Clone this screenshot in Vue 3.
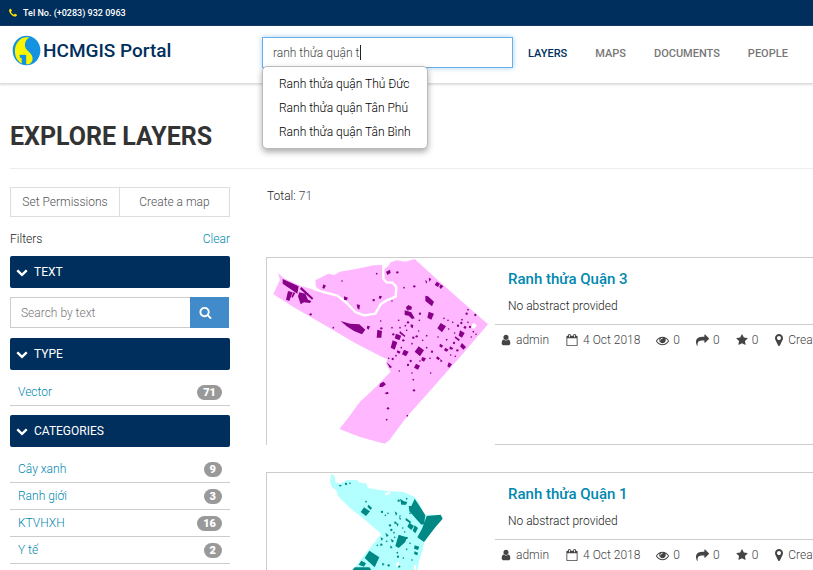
<script setup>
import { ref } from 'vue'

const icons = {
  phone: 'M1600 1240q0 27-10 70.5t-21 68.5q-21 50-122 106-94 51-186 51-27 0-53-3.5t-57.5-12.5-47-14.5-55.5-20.5-49-18q-98-35-175-83-127-79-264-216t-216-264q-48-77-83-175-3-9-18-49t-20.5-55.5-14.5-47-12.5-57.5-3.5-53q0-92 51-186 56-101 106-122 25-11 68.5-21t70.5-10q14 0 21 3 18 6 53 76 11 19 30 54t35 63.5 31 53.5q3 4 17.5 25t21.5 35.5 7 28.5q0 20-28.5 50t-62 55-62 53-28.5 46q0 9 5 22.5t8.5 20.5 14 24 11.5 19q76 137 174 235t235 174q2 1 19 11.5t24 14 20.5 8.5 22.5 5q18 0 46-28.5t53-62 55-62 50-28.5q14 0 28.5 7t35.5 21.5 25 17.5q25 15 53.5 31t63.5 35 54 30q70 35 76 53 3 7 3 21z',
  search: 'M1216 832q0-185-131.5-316.5t-316.5-131.5-316.5 131.5-131.5 316.5 131.5 316.5 316.5 131.5 316.5-131.5 131.5-316.5zm512 832q0 52-38 90t-90 38q-54 0-90-38l-343-342q-179 124-399 124-143 0-273.5-55.5t-225-150-150-225-55.5-273.5 55.5-273.5 150-225 225-150 273.5-55.5 273.5 55.5 225 150 150 225 55.5 273.5q0 220-124 399l343 343q37 37 37 90z',
  chevron: 'M1683 808l-742 741q-19 19-45 19t-45-19l-742-741q-19-19-19-45.5t19-45.5l166-165q19-19 45-19t45 19l531 531 531-531q19-19 45-19t45 19l166 165q19 19 19 45.5t-19 45.5z',
  user: 'M1536 1399q0 109-62.5 187t-150.5 78h-854q-88 0-150.5-78t-62.5-187q0-85 8.5-160.5t31.5-152 58.5-131 94-89 134.5-34.5q131 128 313 128t313-128q76 0 134.5 34.5t94 89 58.5 131 31.5 152 8.5 160.5zm-256-887q0 159-112.5 271.5t-271.5 112.5-271.5-112.5-112.5-271.5 112.5-271.5 271.5-112.5 271.5 112.5 112.5 271.5z',
  calendar: 'M192 1664h1408v-1024h-1408v1024zm384-1216v-288q0-14-9-23t-23-9h-64q-14 0-23 9t-9 23v288q0 14 9 23t23 9h64q14 0 23-9t9-23zm768 0v-288q0-14-9-23t-23-9h-64q-14 0-23 9t-9 23v288q0 14 9 23t23 9h64q14 0 23-9t9-23zm384-64v1280q0 52-38 90t-90 38h-1408q-52 0-90-38t-38-90v-1280q0-52 38-90t90-38h128v-96q0-66 47-113t113-47h64q66 0 113 47t47 113v96h384v-96q0-66 47-113t113-47h64q66 0 113 47t47 113v96h128q52 0 90 38t38 90z',
  eye: 'M1664 960q-152-236-381-353 61 104 61 225 0 185-131.5 316.5t-316.5 131.5-316.5-131.5-131.5-316.5q0-121 61-225-229 117-381 353 133 205 333.5 326.5t434.5 121.5 434.5-121.5 333.5-326.5zm-720-384q0-20-14-34t-34-14q-125 0-214.5 89.5t-89.5 214.5q0 20 14 34t34 14 34-14 14-34q0-86 61-147t147-61q20 0 34-14t14-34zm848 384q0 34-20 69-140 230-376.5 368.5t-499.5 138.5-499.5-139-376.5-368q-20-35-20-69t20-69q140-229 376.5-368t499.5-139 499.5 139 376.5 368q20 35 20 69z',
  share: 'M1792 640q0 26-19 45l-512 512q-19 19-45 19t-45-19-19-45v-256h-224q-98 0-175.5 6t-154 21.5-133 42.5-105.5 69.5-80 101-48.5 138.5-17.5 181q0 55 5 123 0 6 2.5 23.5t2.5 26.5q0 15-8.5 25t-23.5 10q-16 0-28-17-7-9-13-22t-13.5-30-10.5-24q-127-285-127-451 0-199 53-333 162-403 875-403h224v-256q0-26 19-45t45-19 45 19l512 512q19 19 19 45z',
  star: 'M1728 647q0 22-26 48l-363 354 86 500q1 7 1 20 0 21-10.5 35.5t-30.5 14.5q-19 0-40-12l-449-236-449 236q-22 12-40 12-21 0-31.5-14.5t-10.5-35.5q0-6 2-20l86-500-364-354q-25-27-25-48 0-37 56-46l502-73 225-455q19-41 49-41t49 41l225 455 502 73q56 9 56 46z',
  marker: 'M1152 640q0-106-75-181t-181-75-181 75-75 181 75 181 181 75 181-75 75-181zm256 0q0 109-33 179l-364 774q-16 33-47.5 52t-67.5 19-67.5-19-46.5-52l-365-774q-33-70-33-179 0-212 150-362t362-150 362 150 150 362z'
}

const query = ref('ranh thửa quận t')
const filterText = ref('')
const suggestions = ['Ranh thửa quận Thủ Đức', 'Ranh thửa quận Tân Phú', 'Ranh thửa quận Tân Bình']
const nav = ['LAYERS', 'MAPS', 'DOCUMENTS', 'PEOPLE']
const types = [{ name: 'Vector', count: 71 }]
const categories = [
  { name: 'Cây xanh', count: 9 },
  { name: 'Ranh giới', count: 3 },
  { name: 'KTVHXH', count: 16 },
  { name: 'Y tế', count: 2 },
  { name: 'Giao thông', count: 5 }
]

const layers = [
  {
    title: 'Ranh thửa Quận 3',
    view: '21 25 684 561',
    land: '#ffb8ff',
    fill: '#880088',
    area: 'M54 70L72 86 120 108 187 127 168 112 166 92 205 72 222 76 240 66 300 56 340 47 368 46 374 58 388 46 392 38 410 32 436 36 464 28 530 88 600 150 684 224 600 322 520 412 440 502 388 572 374 582 300 562 238 538 262 508 300 456 350 410 392 366 378 342 382 328 366 322 285 280 200 230 100 172 40 134 60 90Z',
    channel: 'M370 44V88L380 98 398 99 409 112 407 141 380 152 362 164 346 192 312 197 286 187 260 160 232 138 190 127 160 118',
    shapes: 'M68 88L116 110 112 132 88 116 68 102ZM84 124L98 128 88 154 78 150ZM100 128L106 130 98 144 94 142ZM124 112L160 146 156 150 120 118ZM118 128L136 132 144 150 154 154 150 160 132 158 122 164 114 140ZM242 214L270 222 298 224 316 240 306 254 282 244 260 230ZM190 104L198 108 192 118 187 114ZM252 140L264 144 260 152 252 150ZM290 164L300 166 298 180 292 176ZM378 66L390 60 392 70 382 76ZM338 148H344V155H338ZM358 138L366 140 362 148 356 146ZM322 228L330 230 326 240 320 236ZM352 240L366 244 364 264 350 264ZM408 252L424 258 418 272 404 266ZM398 272L412 278 404 300 392 294ZM434 182L454 188 464 206 456 208 446 198 434 196ZM438 172L446 166 456 172 454 180 440 180ZM496 138L504 140 522 156 516 170 496 154ZM506 186L522 192 514 210 502 204ZM542 220L558 230 546 248 532 236ZM476 290L492 302 480 320 464 306ZM530 96L540 102 534 112 524 106ZM542 104L550 110 542 118 538 112ZM506 84L514 88 508 96ZM496 90L502 96 498 102ZM432 300L446 306 438 320 426 314ZM468 342L480 348 474 360 462 354ZM486 322L498 326 492 336 484 332ZM452 224L460 226 458 236 452 232ZM600 242L614 250 606 264 596 258ZM606 280L618 292 610 300 600 290ZM566 338L576 344 568 354 562 350ZM540 282L550 288 544 294 538 290ZM556 294L566 300 560 306 552 302ZM570 290L580 296 576 300 568 298ZM586 260L600 270 596 274 584 264ZM532 320L540 326 536 332 528 326ZM360 402L370 396 378 404 368 412 358 412ZM374 430L384 426 386 432 378 434ZM380 338L396 352 390 356ZM420 244L436 258 434 262 418 250ZM412 302L422 306 418 312 410 308ZM614 228L620 232 616 238 610 234ZM540 328L548 334 542 338Z',
    holes: 'M636 224L644 220 650 228 642 238 634 234Z',
    dots: [[152,194],[246,94],[350,72],[412,68],[396,154],[432,114],[463,110],[220,234],[362,214],[364,236],[396,234],[416,212],[444,218],[478,212],[476,244],[460,264],[488,272],[440,242],[430,272],[424,294],[456,282],[398,328],[386,326],[408,318],[452,334],[418,364],[456,370],[462,422],[442,498],[380,510],[384,476],[512,370],[500,294],[516,306],[566,238],[578,218],[594,228],[606,210],[624,218],[630,232],[640,246],[624,180],[646,196],[648,254],[634,262],[620,192],[584,250],[560,270],[582,280],[564,212],[552,206],[604,220],[534,262],[500,258],[470,260],[510,326],[586,320],[592,302],[572,316],[480,334],[444,346],[460,390],[444,180],[480,192],[436,228],[420,234],[400,254]]
  },
  {
    title: 'Ranh thửa Quận 1',
    view: '21 39 684 561',
    land: '#b3ffff',
    fill: '#008885',
    area: 'M214 42L224 48 226 66 240 72 260 60 290 60 300 68 318 70 324 84 344 88 376 92 390 94 430 96 466 112 480 134 494 164 530 164 548 174 530 196 510 220 492 248 488 270 478 300 470 340 440 410 380 460 300 480 230 410 280 328 320 276 364 222 320 184 270 144 234 108 228 90 216 82 210 64Z',
    channel: 'M376 104L390 96M465 316V334',
    shapes: 'M464 116L480 140 496 166 492 192 484 194 448 154 446 138 454 138ZM500 168L542 164 548 176 526 202 492 246 472 232 486 206ZM416 224L440 232 436 246 416 264 406 258ZM328 272L358 292 344 322 314 294ZM312 142L330 154 318 168 302 156ZM326 134L336 144 332 150 322 140ZM304 302L318 310 312 320 296 314ZM284 322L328 322 340 340 300 380 270 340ZM420 116L432 124 442 126 438 134 424 134ZM448 188L462 198 454 210 442 200ZM438 174L454 186 450 190 436 180ZM464 196L474 204 466 220 458 212ZM404 154L412 160 408 168ZM392 236L402 242 396 248ZM390 256L398 262 392 266ZM362 232L370 236 364 242ZM464 256L478 260 474 270 462 266ZM464 274L474 278 472 286 462 282ZM366 308L374 312 368 318ZM376 218L386 226 380 232ZM408 188L416 192 412 200ZM416 170L424 176 420 180ZM412 310L422 320 416 324ZM236 74L246 76 240 80Z',
    holes: 'M408 312L416 304 418 316 410 322Z',
    dots: [[258,72],[270,70],[318,125],[366,156],[376,166],[384,160],[406,188],[428,204],[434,216],[394,210],[402,218],[352,256],[364,254],[380,244],[412,278],[414,290],[430,294],[456,300],[386,316],[440,268],[450,250],[416,122],[440,116],[420,168],[440,234],[404,232],[450,160],[390,196]]
  }
]

const meta = [
  { icon: 'user', text: 'admin' },
  { icon: 'calendar', text: '4 Oct 2018' },
  { icon: 'eye', text: '0' },
  { icon: 'share', text: '0' },
  { icon: 'star', text: '0' },
  { icon: 'marker', text: 'Create a Map' }
]
</script>

<template>
  <div class="page">
    <div class="topbar">
      <svg class="icon phone" viewBox="0 0 1792 1792"><path :d="icons.phone" /></svg>
      <span>Tel No. (+0283) 932 0963</span>
    </div>

    <header class="header">
      <a href="#" class="brand">
        <svg class="logo" viewBox="0 0 90 96">
          <ellipse cx="45" cy="48" rx="43" ry="46" fill="#1592e0" />
          <path d="M54 8C28 2 9 24 9 50C9 68 18 82 30 88V70H24V62H44V91C60 92 68 76 62 64C56 52 40 46 40 32C40 20 46 12 54 8Z" fill="#fbf500" />
          <path d="M24 63H41V92M26 70H35V88" fill="none" stroke="#1592e0" stroke-width="3" />
        </svg>
        <span>HCMGIS Portal</span>
      </a>
      <form class="search" @submit.prevent>
        <input v-model="query" type="text" aria-label="Search" class="search-input" />
        <span class="caret"></span>
        <ul class="suggestions">
          <li v-for="s in suggestions" :key="s"><a href="#">{{ s }}</a></li>
        </ul>
      </form>
      <nav class="nav">
        <a v-for="(n, i) in nav" :key="n" href="#" :class="{ active: i === 0 }">{{ n }}</a>
      </nav>
    </header>

    <main class="content">
      <h1>EXPLORE LAYERS</h1>
      <div class="columns">
        <aside class="sidebar">
          <div class="actions">
            <button type="button">Set Permissions</button>
            <button type="button">Create a map</button>
          </div>
          <div class="filters"><span>Filters</span><a href="#">Clear</a></div>

          <button type="button" class="section">
            <svg class="icon" viewBox="0 0 1792 1792"><path :d="icons.chevron" /></svg>TEXT
          </button>
          <form class="text-search" @submit.prevent>
            <input v-model="filterText" type="text" placeholder="Search by text" aria-label="Search by text" />
            <button type="submit" aria-label="Search">
              <svg class="icon" viewBox="0 0 1792 1792"><path :d="icons.search" /></svg>
            </button>
          </form>

          <button type="button" class="section">
            <svg class="icon" viewBox="0 0 1792 1792"><path :d="icons.chevron" /></svg>TYPE
          </button>
          <ul class="facets">
            <li v-for="t in types" :key="t.name"><a href="#">{{ t.name }}</a><span class="badge">{{ t.count }}</span></li>
          </ul>

          <button type="button" class="section">
            <svg class="icon" viewBox="0 0 1792 1792"><path :d="icons.chevron" /></svg>CATEGORIES
          </button>
          <ul class="facets">
            <li v-for="c in categories" :key="c.name"><a href="#">{{ c.name }}</a><span class="badge">{{ c.count }}</span></li>
          </ul>
        </aside>

        <section class="results">
          <p class="total">Total: <span>71</span></p>
          <article v-for="l in layers" :key="l.title" class="card">
            <svg class="thumb" :viewBox="l.view">
              <path :d="l.area" :fill="l.land" />
              <path :d="l.channel" fill="none" stroke="#fff" stroke-width="7" stroke-linejoin="round" />
              <path :d="l.shapes" :fill="l.fill" />
              <path :d="l.holes" fill="#fff" />
              <circle v-for="(d, i) in l.dots" :key="i" :cx="d[0]" :cy="d[1]" :r="i % 3 ? 2.5 : 3.5" :fill="l.fill" />
            </svg>
            <div class="info">
              <h2><a href="#">{{ l.title }}</a></h2>
              <p class="abstract">No abstract provided</p>
              <ul class="meta">
                <li v-for="m in meta" :key="m.icon">
                  <svg class="icon" :class="m.icon" :viewBox="m.icon === 'marker' ? '256 0 1280 1792' : '0 0 1792 1792'"><path :d="icons[m.icon]" /></svg>{{ m.text }}
                </li>
              </ul>
            </div>
          </article>
        </section>
      </div>
    </main>
  </div>
</template>

<style>
html {
  scrollbar-width: none;
}
body {
  margin: 0;
  background: #fff;
}
</style>

<style scoped>
.page {
  overflow: hidden;
  font-family: Roboto, "Liberation Sans", sans-serif;
  font-size: 12px;
  font-weight: 300;
  line-height: 18px;
  color: #222;
}
.page *,
.page {
  box-sizing: border-box;
}
a {
  color: #0088b0;
  text-decoration: none;
}
ul {
  list-style: none;
  margin: 0;
  padding: 0;
}
button,
input {
  font: inherit;
}
.icon {
  width: 12px;
  height: 12px;
  flex: none;
  fill: currentColor;
}
.topbar {
  display: flex;
  align-items: center;
  gap: 5px;
  height: 26px;
  padding: 0 8px;
  background: #002f5d;
  color: #fff;
  font-size: 9px;
  font-weight: 500;
}
.icon.phone {
  width: 10px;
  height: 10px;
  color: #ffe000;
}
.header {
  display: grid;
  grid-template-columns: 250px minmax(200px, 251px) 1fr;
  align-items: start;
  height: 58px;
  padding: 0 12px;
  border-bottom: 1px solid #ddd;
  box-shadow: 0 1px 2px #ddd;
}
.brand {
  display: flex;
  align-items: center;
  gap: 2px;
  padding-top: 9px;
  font-size: 19px;
  font-weight: 500;
  line-height: 30px;
  color: #002f5d;
}
.logo {
  width: 29px;
  height: 31px;
}
.search {
  position: relative;
  padding-top: 11px;
}
.search-input {
  display: block;
  width: 100%;
  height: 31px;
  padding: 0 10px;
  border: 1px solid #66afe9;
  box-shadow: 0 0 5px #66afe999;
  outline: none;
  color: #444;
}
.caret {
  position: absolute;
  left: 98px;
  top: 19px;
  width: 1px;
  height: 15px;
  background: #222;
}
.suggestions {
  position: absolute;
  z-index: 2;
  top: 40px;
  left: 0;
  padding: 5px 16px 4px;
  border: 1px solid #bbb;
  border-radius: 5px;
  background: #fff;
  box-shadow: 0 3px 6px #0005;
  line-height: 24px;
  white-space: nowrap;
}
.suggestions a {
  color: #000;
}
.nav {
  display: flex;
  gap: 28px;
  padding: 19px 0 0 15px;
  font-size: 11px;
  font-weight: 500;
}
.nav a {
  color: #777;
}
.nav a.active {
  color: #002f5d;
}
.content {
  padding: 34px 0 0 10px;
}
h1 {
  margin: 0;
  padding-bottom: 12px;
  border-bottom: 1px solid #eee;
  font-size: 25px;
  font-weight: 700;
  line-height: 38px;
  color: #333;
}
.columns {
  display: grid;
  grid-template-columns: 220px minmax(0, 1fr);
  gap: 36px;
  padding-top: 18px;
}
.actions {
  display: grid;
  grid-template-columns: 1fr 1fr;
}
.actions button {
  height: 30px;
  padding: 0;
  border: 1px solid #ddd;
  background: #fff;
  color: #555;
}
.actions button + button {
  border-left: 0;
}
.filters {
  display: flex;
  justify-content: space-between;
  padding: 13px 0 8px;
}
.section {
  display: flex;
  align-items: center;
  gap: 6px;
  width: 100%;
  height: 32px;
  padding: 0 6px;
  border: 0;
  border-radius: 2px;
  background: #002f5d;
  color: #fff;
  font-weight: 400;
}
.text-search {
  display: flex;
  padding: 9px 1px 10px 0;
}
.text-search input {
  flex: 1;
  min-width: 0;
  height: 31px;
  padding: 0 10px;
  border: 1px solid #ccc;
  border-right: 0;
}
.text-search input::placeholder {
  color: #777;
}
.text-search button {
  display: grid;
  place-items: center start;
  width: 39px;
  height: 31px;
  padding: 0 9px;
  border: 0;
  background: #428bca;
  color: #fff;
}
.text-search .icon {
  width: 13px;
  height: 13px;
}
.facets {
  padding: 9px 0;
}
.facets li {
  display: flex;
  align-items: center;
  justify-content: space-between;
  height: 27px;
  padding: 0 8px;
  border-bottom: 1px solid #ccc;
}
.badge {
  padding: 0 6px;
  border-radius: 8px;
  background: #999;
  color: #fff;
  font-size: 11px;
  font-weight: 900;
  line-height: 15px;
}
.total {
  margin: 0;
  padding: 0 1px 52px;
}
.total span {
  color: #444;
}
.card {
  display: flex;
  margin-bottom: 27px;
  border: 1px solid #ccc;
  border-width: 1px 0 0 1px;
}
.thumb {
  flex: none;
  width: 228px;
  height: 187px;
}
.info {
  flex: 1;
  min-width: 0;
  border-bottom: 1px solid #ccc;
}
h2 {
  margin: 0;
  padding: 10px 13px 0;
  font-size: 15px;
  font-weight: 500;
  line-height: 22px;
}
.abstract {
  margin: 0;
  padding: 7px 13px 9px;
  border-bottom: 1px solid #ccc;
}
.meta {
  display: flex;
  gap: 16px;
  padding: 6px 5px;
  white-space: nowrap;
  color: #444;
}
.meta li {
  display: flex;
  align-items: center;
  gap: 4px;
}
.icon.calendar {
  width: 14px;
}
.icon.eye,
.icon.share {
  width: 13px;
  height: 13px;
}
.icon.marker {
  width: 10px;
  height: 14px;
}
</style>
